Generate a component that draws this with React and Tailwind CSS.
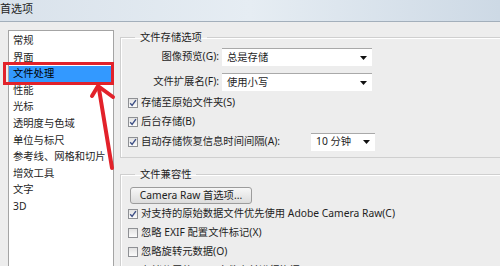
import React from "react";

const FONT = "font-['Noto_Sans','Noto_Sans_CJK_SC',sans-serif]";

function Check({ checked }) {
  return (
    <span className="w-[10px] h-[10px] shrink-0 border border-[#8e9094] bg-linear-to-b from-[#e2e2e2] to-[#fbfbfb] flex items-center justify-center">
      {checked && (
        <svg width="8" height="8" viewBox="0 0 8 8">
          <path d="M1.2 4.2 L3.1 6.4 L6.9 1.2" stroke="#3d4f86" strokeWidth="1.4" fill="none" />
        </svg>
      )}
    </span>
  );
}

function Arrow() {
  return (
    <svg width="7" height="4" viewBox="0 0 7 4">
      <path d="M0 0 L7 0 L3.5 4 Z" fill="#111" />
    </svg>
  );
}

function Select({ w, text }) {
  return (
    <div className={`${w} h-[18px] bg-white border-t border-[#a9a9a9] flex items-center justify-between pl-[5px] pr-[5px] shrink-0`}>
      <span>{text}</span>
      <Arrow />
    </div>
  );
}

function CheckRow({ checked, children, className = "" }) {
  return (
    <div className={`flex items-center gap-[3px] h-[19px] pl-[7px] ${className}`}>
      <Check checked={checked} />
      {children}
    </div>
  );
}

const items = [
  "常规",
  "界面",
  "文件处理",
  "性能",
  "光标",
  "透明度与色域",
  "单位与标尺",
  "参考线、网格和切片",
  "增效工具",
  "文字",
  "3D",
];

export default function App() {
  return (
    <div className={`relative w-[500px] h-[266px] overflow-hidden bg-[#ededed] text-[10.3px] text-[#1e1e1e] ${FONT}`}>
      {/* title bar */}
      <div className="h-[22px] bg-linear-to-r from-[#d9e2eb] via-[#e6edf3] to-[#cdd9e5] border-b border-[#a3afbb] flex items-center text-[11px] leading-[14px] pb-[4px]">
        <span>首选项</span>
      </div>

      <div className="flex pl-[8px] pt-[8px]">
        {/* left list */}
        <div className="w-[106px] h-[260px] shrink-0 bg-white border border-[#a4a4a4] pt-[1.5px]">
          {items.map((it) => (
            <div
              key={it}
              className={`h-[16.6px] flex items-center pl-[4px] ${it === "文件处理" ? "bg-[#3399ff] text-black" : ""}`}
            >
              {it}
            </div>
          ))}
        </div>

        {/* right column */}
        <div className="ml-[6px] w-[400px] shrink-0 flex flex-col">
          <fieldset className="border border-[#cfcfcf] shadow-[inset_1px_1px_0_#ffffff] pb-[6px]">
            <legend className="ml-[14px] px-[5px] leading-[14px]">文件存储选项</legend>
            <div className="flex items-center mt-[4px] h-[18px]">
              <span className="w-[98px] text-right">图像预览(G):</span>
              <div className="ml-[3px]"><Select w="w-[150px]" text="总是存储" /></div>
            </div>
            <div className="flex items-center mt-[7px] h-[18px]">
              <span className="w-[98px] text-right">文件扩展名(F):</span>
              <div className="ml-[3px]"><Select w="w-[150px]" text="使用小写" /></div>
            </div>
            <CheckRow checked className="mt-[2px]">
              <span>存储至原始文件夹(S)</span>
            </CheckRow>
            <CheckRow checked>
              <span>后台存储(B)</span>
            </CheckRow>
            <CheckRow checked className="mt-[1px]">
              <span className="w-[167px] shrink-0 whitespace-nowrap">自动存储恢复信息时间间隔(A):</span>
              <Select w="w-[64px]" text="10 分钟" />
            </CheckRow>
          </fieldset>

          <fieldset className="mt-[9px] border border-[#cfcfcf] shadow-[inset_1px_1px_0_#ffffff] h-[120px]">
            <legend className="ml-[14px] px-[5px] leading-[14px]">文件兼容性</legend>
            <div className="mt-[6px] ml-[9px] w-[122px] h-[17px] border border-[#9c9c9c] rounded-[3px] bg-linear-to-b from-[#f7f7f7] to-[#dcdcdc] flex items-center justify-center whitespace-nowrap">
              Camera Raw 首选项...
            </div>
            <CheckRow checked>
              <span className="whitespace-nowrap">对支持的原始数据文件优先使用 Adobe Camera Raw(C)</span>
            </CheckRow>
            <CheckRow>
              <span className="whitespace-nowrap">忽略 EXIF 配置文件标记(X)</span>
            </CheckRow>
            <CheckRow>
              <span className="whitespace-nowrap">忽略旋转元数据(O)</span>
            </CheckRow>
            <CheckRow checked>
              <span className="whitespace-nowrap">存储分层的 TIFF 文件之前进行询问(T)</span>
            </CheckRow>
          </fieldset>
        </div>
      </div>

      {/* red annotation box */}
      <div className="absolute left-[3px] top-[62px] w-[111px] h-[23px] border-[3px] border-[#e2222a]" />

      {/* red arrow */}
      <svg className="absolute left-0 top-0 pointer-events-none" width="500" height="266" viewBox="0 0 500 266">
        <path d="M112 168 L99 89" stroke="#e2222a" strokeWidth="4" strokeLinecap="round" fill="none" />
        <path d="M92 96 L98 86 L113 97" stroke="#e2222a" strokeWidth="4" strokeLinecap="round" strokeLinejoin="round" fill="none" />
      </svg>
    </div>
  );
}
